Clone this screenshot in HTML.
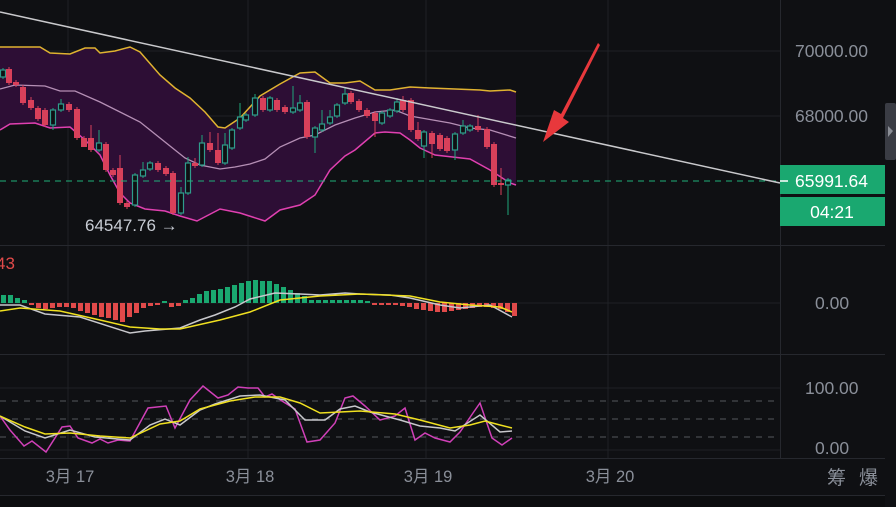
<!DOCTYPE html>
<html><head><meta charset="utf-8"><style>
html,body{margin:0;padding:0;background:#0f1013;overflow:hidden}
svg{display:block}
text{font-family:"Liberation Sans","Noto Sans CJK SC",sans-serif}
</style></head><body>
<svg id="s" width="896" height="507" viewBox="0 0 896 507" xmlns="http://www.w3.org/2000/svg">
<rect width="896" height="507" fill="#0f1013"/>
<rect x="0" y="495" width="885" height="12" fill="#0c0d0f"/>
<g stroke="#1f2126" stroke-width="1">
<line x1="0" y1="51" x2="780" y2="51"/><line x1="0" y1="116" x2="780" y2="116"/>
<line x1="0" y1="303" x2="780" y2="303"/><line x1="0" y1="388" x2="780" y2="388"/><line x1="0" y1="450" x2="780" y2="450"/>
<line x1="68" y1="0" x2="68" y2="458"/><line x1="248" y1="0" x2="248" y2="458"/><line x1="426" y1="0" x2="426" y2="458"/><line x1="608" y1="0" x2="608" y2="458"/>
</g>
<g stroke="#26282e" stroke-width="1">
<line x1="0" y1="245.5" x2="885" y2="245.5"/><line x1="0" y1="354.5" x2="885" y2="354.5"/><line x1="0" y1="458.5" x2="885" y2="458.5"/>
<line x1="0" y1="495.5" x2="885" y2="495.5"/><line x1="780.5" y1="0" x2="780.5" y2="458"/>
</g>
<g id="band"></g>
<g id="candles"></g>
<line x1="0" y1="181" x2="780" y2="181" stroke="#1fb07a" stroke-width="1" stroke-dasharray="6,5"/>
<line x1="0" y1="12" x2="780" y2="183" stroke="#c9c9cc" stroke-width="1.5"/>
<text x="85" y="231" fill="#c8ccd4" font-size="17">64547.76 →</text>
<polygon points="598,43 561,114 554,110 543,142 569,122 563,118 600,45" fill="#e8383c"/>
<g id="macd"></g>
<text x="-4" y="269" fill="#e04a4a" font-size="17">43</text>
<g stroke="#55575d" stroke-width="1" stroke-dasharray="6,6">
<line x1="0" y1="401" x2="780" y2="401"/><line x1="0" y1="419" x2="780" y2="419"/><line x1="0" y1="437" x2="780" y2="437"/>
</g>
<g id="rsi"></g>
<g fill="#8a8f99" font-size="17.5">
<text x="795" y="57">70000.00</text><text x="795" y="122">68000.00</text>
<text x="815" y="309">0.00</text><text x="805" y="394">100.00</text><text x="815" y="454">0.00</text>
<text x="70" y="482" text-anchor="middle" font-size="16.5">3月 17</text>
<text x="250" y="482" text-anchor="middle" font-size="16.5">3月 18</text>
<text x="428" y="482" text-anchor="middle" font-size="16.5">3月 19</text>
<text x="610" y="482" text-anchor="middle" font-size="16.5">3月 20</text>
<text x="827" y="484" font-size="19">筹</text><text x="859" y="484" font-size="19">爆</text>
</g>
<rect x="780" y="165" width="105" height="29" fill="#1aa870"/>
<rect x="780" y="197" width="105" height="29" fill="#1aa870"/>
<line x1="780" y1="181" x2="788" y2="181" stroke="#fff" stroke-width="1.5"/>
<text x="795" y="187" fill="#fff" font-size="17.5">65991.64</text>
<text x="832" y="218" fill="#fff" font-size="17.5" text-anchor="middle">04:21</text>
<rect x="885" y="103" width="11" height="57" rx="2" fill="#3a3c44"/>
<polygon points="888,126 893,131 888,137" fill="#8a8d95"/>
</svg>
<script>
var NS="http://www.w3.org/2000/svg";
function el(p,t,a){var e=document.createElementNS(NS,t);for(var k in a)e.setAttribute(k,a[k]);p.appendChild(e);return e;}
function pts(a){return a.map(function(p){return p[0]+","+p[1]}).join(" ");}
var up=[[0,47],[40,47],[50,53],[70,54],[85,48],[95,48],[100,53],[115,51],[130,47],[140,52],[160,75],[175,88],[190,98],[205,112],[218,127],[225,128],[240,118],[260,96],[280,84],[300,73],[315,72],[330,83],[345,83],[360,81],[375,90],[390,90],[410,87],[430,88],[480,90],[490,91],[510,90],[516,92]];
var lo=[[0,130],[10,124],[35,123],[50,128],[70,127],[85,140],[100,155],[110,175],[120,193],[130,203],[145,209],[165,211],[180,216],[197,221],[220,209],[240,213],[265,221],[280,210],[300,205],[315,195],[330,170],[345,156],[355,150],[375,133],[385,132],[400,133],[410,140],[420,148],[435,155],[470,159],[490,170],[510,183],[516,185]];
var mid=[[0,89],[15,85],[45,86],[60,91],[75,91],[100,102],[140,122],[175,150],[185,158],[200,165],[220,169],[235,167],[250,164],[265,159],[280,147],[300,138],[315,135],[335,125],[355,118],[375,112],[395,110],[410,116],[450,123],[470,128],[490,130],[516,138]];
var b=document.getElementById("band");
el(b,"polygon",{points:pts(up.concat(lo.slice().reverse())),fill:"#2d0e35"});
el(b,"polyline",{points:pts(up),fill:"none",stroke:"#e0b330","stroke-width":1.5});
el(b,"polyline",{points:pts(lo),fill:"none",stroke:"#e040b0","stroke-width":1.5});
el(b,"polyline",{points:pts(mid),fill:"none",stroke:"#b58fb5","stroke-width":1.3});
var C=[[3,70,77,1],[9,69,83,0],[16,82,85,0],[23,87,103,0],[31,100,108,0,97],[38,108,119,0],[45,110,125,0],[53,110,125,1,,130],[61,104,110,1,99],[69,104,110,0],[77,109,138,0],[84,138,147,0,,143],[91,138,150,0,125],[99,143,150,1,130],[106,144,170,0],[113,170,175,0],[120,168,203,0,155],[127,203,207,0],[135,175,205,1],[143,170,176,1,162],[150,163,169,1],[158,163,170,0],[166,168,174,0],[173,173,213,0],[181,193,213,1,187],[188,163,193,1,157],[195,163,166,0,158],[202,143,165,1,135],[210,143,150,0,132],[218,150,163,0,133],[225,145,163,1,133],[232,130,148,1],[240,117,128,1,103],[246,115,120,1],[255,98,115,1,94],[263,98,110,0],[270,98,110,1],[277,100,110,0],[285,107,112,0],[293,108,112,1,86],[300,103,110,1,95],[307,102,137,0],[315,128,137,1,,153],[322,124,130,1,110],[330,117,123,1,110],[337,105,116,1],[345,94,103,1,87],[351,93,102,0],[359,101,110,0],[367,110,116,0],[375,113,121,0,,137],[382,113,123,1,,125],[390,110,116,1],[397,102,111,1,98],[403,100,110,0,96],[411,100,130,0],[418,130,139,0,122],[424,132,146,1,,158],[432,133,144,0,,158],[440,135,149,0],[447,138,151,0],[455,134,150,1,,160],[463,126,133,1,120],[470,126,130,1,124],[478,126,130,0,115],[487,129,147,0],[494,144,185,0],[501,183,185,0,168,195],[508,180,185,1,,215]];
var cg=document.getElementById("candles");
C.forEach(function(c){var col=c[3]?"#2f9c8c":"#d8405a";var wt=c[4]||c[1]-2,wb=c[5]||c[2]+2;
el(cg,"line",{x1:c[0],x2:c[0],y1:wt,y2:wb,stroke:c[3]?"#1fa67a":col,"stroke-width":1});
if(c[3])el(cg,"rect",{x:c[0]-2.5,y:c[1],width:5,height:Math.max(1,c[2]-c[1]),fill:"#0f1013",stroke:col,"stroke-width":1.2});
else el(cg,"rect",{x:c[0]-3,y:c[1],width:6,height:Math.max(1,c[2]-c[1]),fill:col});});
var m=document.getElementById("macd");
var H=[8,8,5,3,-2,-5,-6,-5,-4,-4,-5,-8,-10,-12,-14,-15,-17,-19,-14,-10,-5,-3,-2,2,-4,-3,3,5,9,12,13,14,16,18,20,22,23,22,22,19,16,13,10,7,3,3,3,3,3,3,3,3,2,-2,-2,-2,-2,-3,-4,-6,-7,-8,-9,-9,-8,-7,-6,-5,-4,-4,-5,-6,-9,-13];
H.forEach(function(h,i){var x=i*7+1;if(x>512)return;var g=h>0;el(m,"rect",{x:x,y:g?303-h:303,width:5,height:Math.abs(h),fill:g?"#1aa870":"#e04a4a"});});
el(m,"polyline",{points:pts([[0,305],[20,305],[45,314],[80,317],[130,333],[145,331],[180,328],[200,320],[215,315],[235,307],[250,299],[275,293],[300,294],[320,295],[345,293],[360,294],[390,295],[410,298],[440,305],[460,308],[490,305],[512,317]]),fill:"none",stroke:"#c8c8cc","stroke-width":1.5});
el(m,"polyline",{points:pts([[0,311],[20,308],[60,311],[100,320],[130,327],[160,329],[180,329],[220,320],[250,312],[280,300],[320,296],[360,294],[410,296],[440,302],[470,305],[500,307],[512,312]]),fill:"none",stroke:"#f0e020","stroke-width":1.5});
var r=document.getElementById("rsi");
el(r,"polyline",{points:pts([[0,416],[10,430],[24,446],[32,441],[46,452],[62,427],[70,426],[78,438],[92,443],[100,439],[108,443],[118,440],[130,441],[148,408],[166,406],[175,428],[190,400],[203,386],[218,398],[228,395],[238,387],[248,388],[258,388],[265,397],[272,394],[282,401],[295,409],[307,442],[320,440],[335,423],[345,398],[353,396],[365,406],[380,420],[395,416],[405,408],[415,440],[425,433],[435,438],[450,442],[460,432],[473,413],[480,403],[492,438],[502,445],[512,438]]),fill:"none",stroke:"#d040b8","stroke-width":1.5});
el(r,"polyline",{points:pts([[0,416],[25,431],[45,438],[70,430],[95,437],[130,440],[150,425],[165,419],[180,425],[200,410],[215,404],[240,396],[260,395],[285,400],[305,420],[325,420],[340,409],[355,406],[370,412],[400,420],[420,426],[440,428],[455,431],[480,415],[500,432],[512,431]]),fill:"none",stroke:"#c8c8cc","stroke-width":1.5});
el(r,"polyline",{points:pts([[0,416],[25,427],[45,434],[70,433],[100,436],[130,438],[160,424],[180,421],[200,409],[230,401],[255,397],[280,397],[300,403],[320,413],[340,412],[360,411],[395,414],[420,420],[450,428],[470,425],[485,421],[500,425],[512,428]]),fill:"none",stroke:"#f0e020","stroke-width":1.5});
</script>
</body></html>
